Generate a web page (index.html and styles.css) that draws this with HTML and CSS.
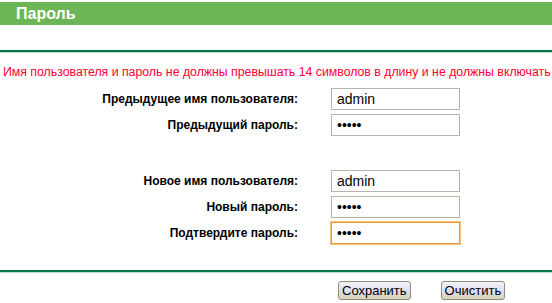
FILE: index.html
```html
<!DOCTYPE html>
<html lang="ru">
<head>
    <meta charset="UTF-8">
    <title>Пароль</title>
    <link rel="stylesheet" href="styles.css">
</head>
<body>
    <div class="title-bar">Пароль</div>
    <div class="rule rule-top"></div>
    <p class="note">Имя пользователя и пароль не должны превышать 14 символов в длину и не должны включать</p>

    <div class="form-grid">
        <label for="oldName">Предыдущее имя пользователя:</label>
        <input type="text" id="oldName" value="admin">
        <label for="oldPass">Предыдущий пароль:</label>
        <input type="password" id="oldPass" value="admin">

        <div class="spacer"></div>

        <label for="newName">Новое имя пользователя:</label>
        <input type="text" id="newName" value="admin">
        <label for="newPass">Новый пароль:</label>
        <input type="password" id="newPass" value="admin">
        <label for="confirmPass">Подтвердите пароль:</label>
        <input type="password" id="confirmPass" value="admin" class="focused">
    </div>

    <div class="rule rule-bottom"></div>

    <div class="buttons">
        <button class="btn">Сохранить</button>
        <button class="btn">Очистить</button>
    </div>
</body>
</html>
```

FILE: styles.css
```css
body {
    margin: 0;
    font-family: "Liberation Sans", Arial, sans-serif;
    background: #ffffff;
    color: #000000;
}
.title-bar {
    margin-top: 2px;
    height: 23px;
    line-height: 24px;
    background-color: #6cb657;
    color: #ffffff;
    font-size: 16px;
    font-weight: bold;
    padding-left: 16px;
}
.rule {
    height: 2px;
    background-color: #00784a;
    border-bottom: 1px solid #b8dcc4;
}
.rule-top {
    margin-top: 25px;
}
.note {
    margin: 12px 0 0 3px;
    font-size: 12.3px;
    line-height: 14px;
    color: #ff0033;
    white-space: nowrap;
}
.form-grid {
    display: grid;
    grid-template-columns: 298px 129px;
    column-gap: 33px;
    row-gap: 4px;
    margin-top: 9px;
    align-items: center;
}
.form-grid label {
    text-align: right;
    font-size: 12px;
    font-weight: bold;
}
.form-grid input {
    box-sizing: border-box;
    width: 129px;
    height: 22px;
    border: 1px solid #b5b5a8;
    padding: 0 5px;
    font-family: "Liberation Sans", Arial, sans-serif;
    font-size: 14px;
    color: #000000;
    outline: none;
}
.form-grid input.focused {
    border: 1px solid #e59b3c;
    box-shadow: 0 0 0 1px #f6c27a;
}
.spacer {
    grid-column: 1 / 3;
    height: 26px;
}
.rule-bottom {
    margin-top: 26px;
}
.buttons {
    display: flex;
    gap: 30px;
    margin: 8px 0 0 338px;
}
.btn {
    font-family: "Liberation Sans", Arial, sans-serif;
    font-size: 13px;
    height: 19px;
    padding: 0 3px;
    line-height: 15px;
    border: 1px solid #8c8c80;
    border-radius: 3px;
    background: linear-gradient(#f4f4fa, #dcdcf0 55%, #d8d4b0);
    color: #000000;
    cursor: pointer;
}
```
